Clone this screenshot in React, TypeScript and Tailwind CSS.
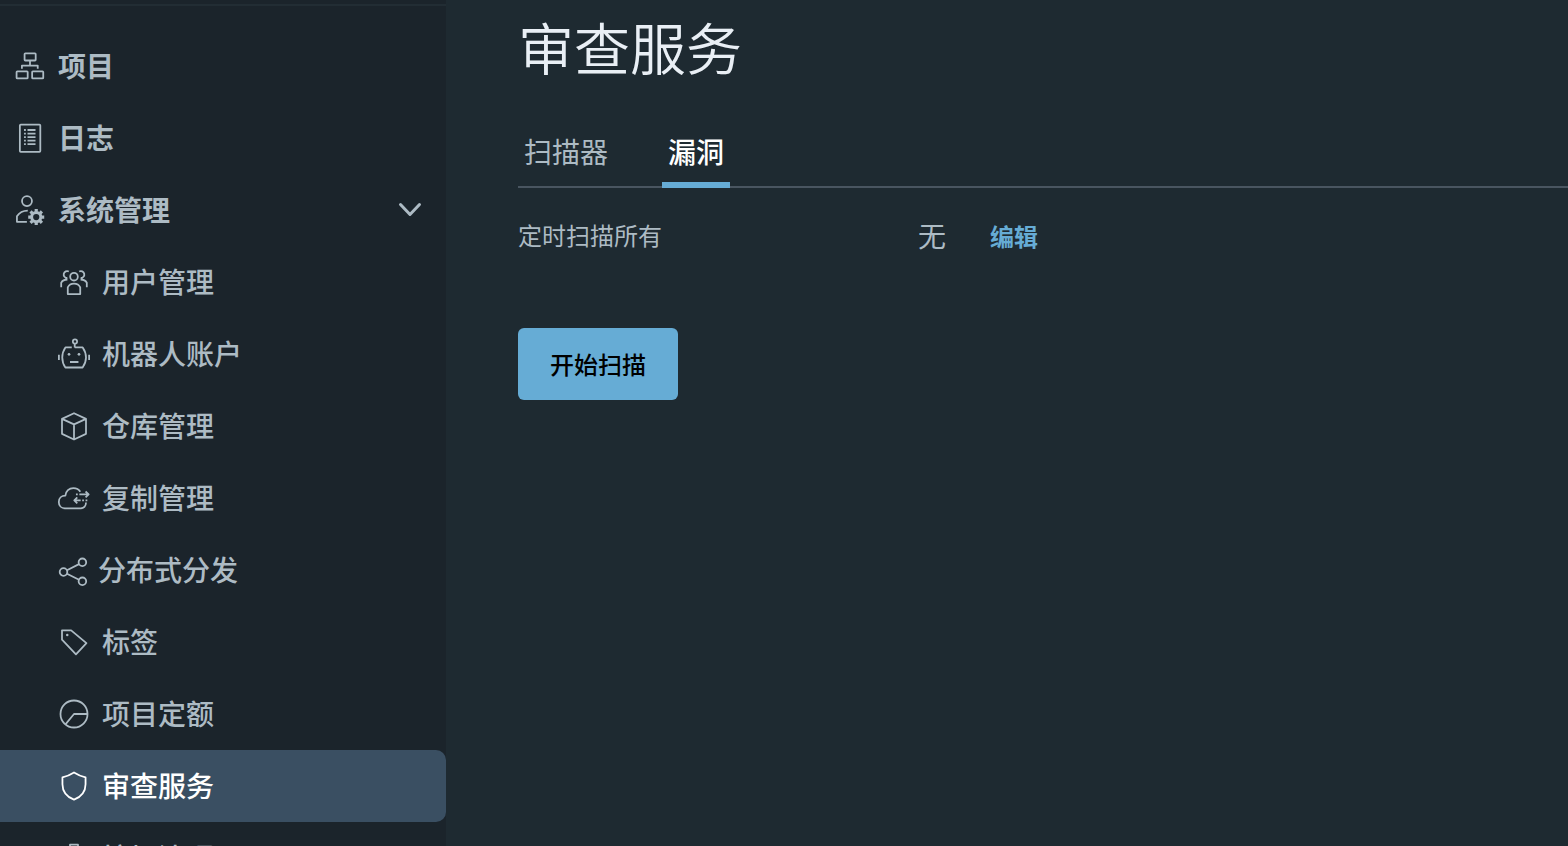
import { useState, type ReactNode } from "react";

function Glyph({ children, narrow = false }: { children: ReactNode; narrow?: boolean }) {
  return (
    <svg
      aria-hidden="true"
      viewBox={narrow ? "0 0 28 32" : "0 0 36 36"}
      className={narrow ? "h-8 w-7 shrink-0 overflow-visible" : "h-8 w-8 shrink-0 overflow-visible"}
      fill="none"
      stroke="currentColor"
      strokeWidth={narrow ? 1.8 : 2}
      strokeLinejoin="round"
    >
      {children}
    </svg>
  );
}

const icons = {
  projects: (
    <Glyph>
      <rect x="11.9" y="3.8" width="12.5" height="8" rx="0.8" />
      <rect x="2.9" y="24" width="12.5" height="8" rx="0.8" />
      <rect x="20.4" y="24" width="12.5" height="8" rx="0.8" />
      <path d="M18 12v5.500M8.900 21v-3.500h17.800V21" />
    </Glyph>
  ),
  logs: (
    <Glyph>
      <rect x="6.6" y="2.9" width="23" height="30.600" rx="1" />
      <path d="M11.3 9h2M11.3 13h2M11.3 17h2M11.3 21h2M11.3 25h2M15.2 9h9M15.2 13h9M15.2 17h9M15.2 21h9M15.2 25h9" />
    </Glyph>
  ),
  admin: (
    <Glyph>
      <circle cx="14.6" cy="8" r="5.6" />
      <path d="M14.500 31.300H3.300v-6.200c2.600-4 7-6.300 12.200-6.300" />
      <circle cx="25" cy="26" r="5.200" strokeWidth="3.400" />
      <path
        d="M25 17v3M25 32v3M16 26h3M31 26h3M18.600 19.600l2.100 2.100M29.300 30.300l2.100 2.100M18.600 32.400l2.100-2.100M29.300 21.700l2.100-2.100"
        strokeWidth="3.600"
      />
    </Glyph>
  ),
  users: (
    <Glyph>
      <circle cx="18" cy="12" r="4.3" />
      <path d="M11 31.600v-7.500c1.200-2.700 4-4.300 7-4.300s5.800 1.600 7 4.300v7.500z" />
      <path d="M12.200 6.200a3.900 3.900 0 1 0-1.700 7.300M3.600 24v-5.200c1.300-2.300 3.600-3.500 7-3.600" />
      <path d="M23.800 6.200a3.900 3.900 0 1 1 1.700 7.300M32.400 24v-5.200c-1.300-2.300-3.600-3.500-7-3.600" />
    </Glyph>
  ),
  robots: (
    <Glyph>
      <circle cx="19.100" cy="4" r="2.400" />
      <path d="M18.800 6.400v4.200M15.500 10.600H8.300C5.600 14.500 4.800 18 4.800 22c0 4 1 7.700 3.500 11.200h19.400c2.500-3.500 3.800-7.200 3.800-11.200 0-4-1-7.500-3.700-11.400h-9" />
      <path d="M1 18.800v6M35 18.800v6M13.500 27h9.500" />
      <circle cx="12.400" cy="18.400" r="1.500" fill="currentColor" stroke="none" />
      <circle cx="23.600" cy="18.400" r="1.500" fill="currentColor" stroke="none" />
    </Glyph>
  ),
  registries: (
    <Glyph>
      <path d="M18 3.600 31.500 10v16.800L18 33.200 4.500 26.800V10zM4.500 10 18 16.200 31.500 10M18 16.200v17" />
    </Glyph>
  ),
  replications: (
    <Glyph>
      <path d="M31.500 23.200c0 4-2.600 6.400-6 6.400H7.900C3.600 29.600.9 26.500.9 22.400s3.100-7 7.400-7c.4-5.100 4.200-8.600 9-8.600 3.400 0 6.200 1.600 7.800 4.200" />
      <path d="M20.200 14h2M24 14h10.500M31 10.700l3.500 3.300-3.500 3.300M25.500 20.700h-7M21.700 17.400l-3.400 3.300 3.400 3.300M27.200 20.700h2M31 20.700h2" />
    </Glyph>
  ),
  distributions: (
    <Glyph narrow>
      <circle cx="5.500" cy="18" r="3.800" />
      <circle cx="24.400" cy="8.300" r="3.800" />
      <circle cx="24.400" cy="27.300" r="3.800" />
      <path d="M9 16.300l12-6.200M9 19.700l12 6" />
    </Glyph>
  ),
  labels: (
    <Glyph>
      <path d="M4.500 4.900h10.300l17.200 14.400-11.800 12.600L4.500 15.400z" />
      <circle cx="10.400" cy="10.200" r="1.400" fill="currentColor" stroke="none" />
    </Glyph>
  ),
  quotas: (
    <Glyph>
      <circle cx="18" cy="18" r="15.200" />
      <path d="M33.200 18H18L8.400 29.600" />
    </Glyph>
  ),
  interrogation: (
    <Glyph>
      <path d="M31 8.400v7.500c0 12.200-11.300 16.800-13 17.500-1.700-.7-13-5.300-13-17.500V8.400c4.800-1.300 9-3.200 13-5.700 4 2.500 8.200 4.400 13 5.700z" />
    </Glyph>
  ),
  cleanup: (
    <Glyph>
      <path d="M13.500 7V3h9v4M5 7.500h26M8 7.500V32h20V7.500M14 13v13M22 13v13" />
    </Glyph>
  ),
};

const topItems = [
  { label: "项目", icon: icons.projects },
  { label: "日志", icon: icons.logs },
];

const adminItems = [
  { label: "用户管理", icon: icons.users },
  { label: "机器人账户", icon: icons.robots },
  { label: "仓库管理", icon: icons.registries },
  { label: "复制管理", icon: icons.replications },
  { label: "分布式分发", icon: icons.distributions },
  { label: "标签", icon: icons.labels },
  { label: "项目定额", icon: icons.quotas },
  { label: "审查服务", icon: icons.interrogation },
  { label: "垃圾清理", icon: icons.cleanup },
];

const tabs = ["扫描器", "漏洞"];

export default function App() {
  const [open, setOpen] = useState(true);
  const [current, setCurrent] = useState("审查服务");
  const [tab, setTab] = useState("漏洞");

  return (
    <div className="flex h-screen overflow-hidden bg-[#1e2a31] font-['Noto_Sans_CJK_SC',sans-serif] text-[#adbbc4]">
      <nav className="w-[446px] shrink-0 overflow-hidden bg-[#1b242b] pt-1">
        <div className="border-t-2 border-[#222d34] pt-6">
          {topItems.map((item) => (
            <a key={item.label} href="#" className="flex h-18 items-center gap-3 pl-3.5 text-[28px] leading-9 font-bold">
              {item.icon}
              <span className="pb-0.5">{item.label}</span>
            </a>
          ))}
          <button
            type="button"
            aria-expanded={open}
            onClick={() => setOpen(!open)}
            className="flex h-18 w-full items-center gap-3 pr-6 pl-3.5 text-[28px] leading-9 font-bold"
          >
            {icons.admin}
            <span className="pb-0.5">系统管理</span>
            <svg
              aria-hidden="true"
              viewBox="0 0 24 24"
              className="ml-auto h-6 w-6"
              fill="none"
              stroke="currentColor"
              strokeWidth="3"
              strokeLinecap="round"
              strokeLinejoin="round"
            >
              <path d="M2.500 6.500 12 16.500l9.500-10" />
            </svg>
          </button>
          {open &&
            adminItems.map((item) => (
              <a
                key={item.label}
                href="#"
                aria-current={item.label === current ? "page" : undefined}
                onClick={() => setCurrent(item.label)}
                className={
                  item.label === current
                    ? "flex h-18 items-center gap-3 rounded-r-[10px] bg-[#3a4f62] pl-[58px] text-[28px] leading-9 font-medium text-white"
                    : "flex h-18 items-center gap-3 pl-[58px] text-[28px] leading-9 font-medium"
                }
              >
                {item.icon}
                <span className="pb-0.5">{item.label}</span>
              </a>
            ))}
        </div>
      </nav>

      <main className="min-w-0 flex-1 pt-3.5 pl-18">
        <h1 className="text-[56px] leading-16 font-[350] text-[#e9eff5]">审查服务</h1>
        <div role="tablist" className="mt-9.5 flex h-18 gap-12 border-b-2 border-[#495560]">
          {tabs.map((name) => (
            <button
              key={name}
              type="button"
              role="tab"
              aria-selected={name === tab}
              onClick={() => setTab(name)}
              className={
                name === tab
                  ? "-mb-0.5 border-b-6 border-[#66acd5] px-1.5 pt-1 text-[28px] leading-9 font-medium text-white"
                  : "-mb-0.5 border-b-6 border-transparent px-1.5 pt-1 text-[28px] leading-9"
              }
            >
              {name}
            </button>
          ))}
        </div>
        <div className="mt-6 flex h-12 items-center">
          <span className="w-[400px] pb-0.5 text-2xl">定时扫描所有</span>
          <span className="w-18 pb-0.5 text-[28px] leading-9">无</span>
          <button type="button" className="text-2xl font-bold text-[#66acd5]">
            编辑
          </button>
        </div>
        <button
          type="button"
          className="mt-17 h-18 w-40 rounded-md bg-[#66acd5] text-2xl font-medium text-black"
        >
          开始扫描
        </button>
      </main>
    </div>
  );
}
